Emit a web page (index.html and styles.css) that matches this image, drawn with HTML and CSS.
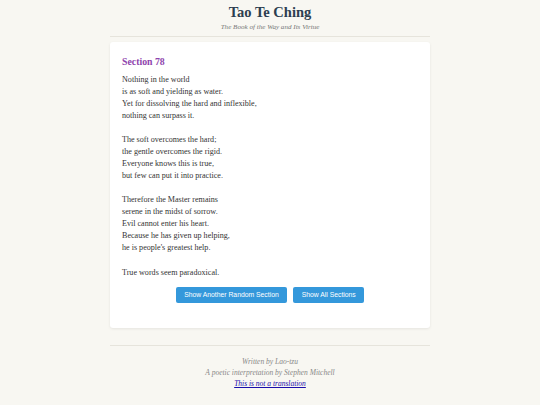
FILE: index.html
```html
<!DOCTYPE html>
<html>
<head>
<meta charset="utf-8">
<link rel="stylesheet" href="styles.css">
</head>
<body>
<div class="container">
  <header class="header">
    <h1 class="title">Tao Te Ching</h1>
    <p class="subtitle">The Book of the Way and Its Virtue</p>
  </header>
  <main class="card">
    <h2 class="section-title">Section 78</h2>
    <div class="poem">
      <p>Nothing in the world<br>is as soft and yielding as water.<br>Yet for dissolving the hard and inflexible,<br>nothing can surpass it.</p>
      <p>The soft overcomes the hard;<br>the gentle overcomes the rigid.<br>Everyone knows this is true,<br>but few can put it into practice.</p>
      <p>Therefore the Master remains<br>serene in the midst of sorrow.<br>Evil cannot enter his heart.<br>Because he has given up helping,<br>he is people's greatest help.</p>
      <p>True words seem paradoxical.</p>
    </div>
    <div class="actions">
      <button class="btn">Show Another Random Section</button>
      <button class="btn">Show All Sections</button>
    </div>
  </main>
  <footer class="footer">
    <p>Written by Lao-tzu</p>
    <p>A poetic interpretation by Stephen Mitchell</p>
    <p><a href="#" class="link">This is not a translation</a></p>
  </footer>
</div>
</body>
</html>
```
FILE: styles.css
```css
html, body {
  margin: 0;
  padding: 0;
}
body {
  background: #f8f7f2;
  font-family: "Liberation Serif", Georgia, serif;
  color: #333;
}
.container {
  width: 320px;
  margin: 0 auto;
}
.header {
  text-align: center;
  padding-top: 3px;
  padding-bottom: 5px;
  border-bottom: 1px solid #e6e4dc;
}
.title {
  margin: 0;
  font-size: 14.5px;
  line-height: 18px;
  color: #2c3e50;
  font-weight: bold;
}
.subtitle {
  margin: 2px 0 0;
  font-size: 7.1px;
  line-height: 8px;
  font-style: italic;
  color: #777;
}
.card {
  margin-top: 5px;
  background: #fff;
  border-radius: 3px;
  box-shadow: 0 1px 3px rgba(0,0,0,0.08);
  padding: 12px 12px 25px;
}
.section-title {
  margin: 2px 0 0;
  font-size: 9.8px;
  line-height: 12px;
  color: #8e44ad;
  font-weight: bold;
}
.poem {
  margin-top: 6px;
  font-size: 8.1px;
  line-height: 12px;
  color: #333;
}
.poem p {
  margin: 0 0 12.2px;
}
.poem p:last-child {
  margin-bottom: 0;
}
.actions {
  display: flex;
  justify-content: center;
  gap: 6px;
  margin-top: 8px;
}
.btn {
  background: #3498db;
  color: #fff;
  border: none;
  border-radius: 2px;
  font-family: "Liberation Sans", Arial, sans-serif;
  font-size: 6.8px;
  height: 16px;
  padding: 0 8.5px;
}
.footer {
  margin-top: 17px;
  border-top: 1px solid #e6e4dc;
  padding-top: 10px;
  text-align: center;
  font-style: italic;
  font-size: 7.5px;
  line-height: 11px;
  color: #888;
}
.footer p {
  margin: 0;
}
.link {
  color: #1a0dab;
}
```
